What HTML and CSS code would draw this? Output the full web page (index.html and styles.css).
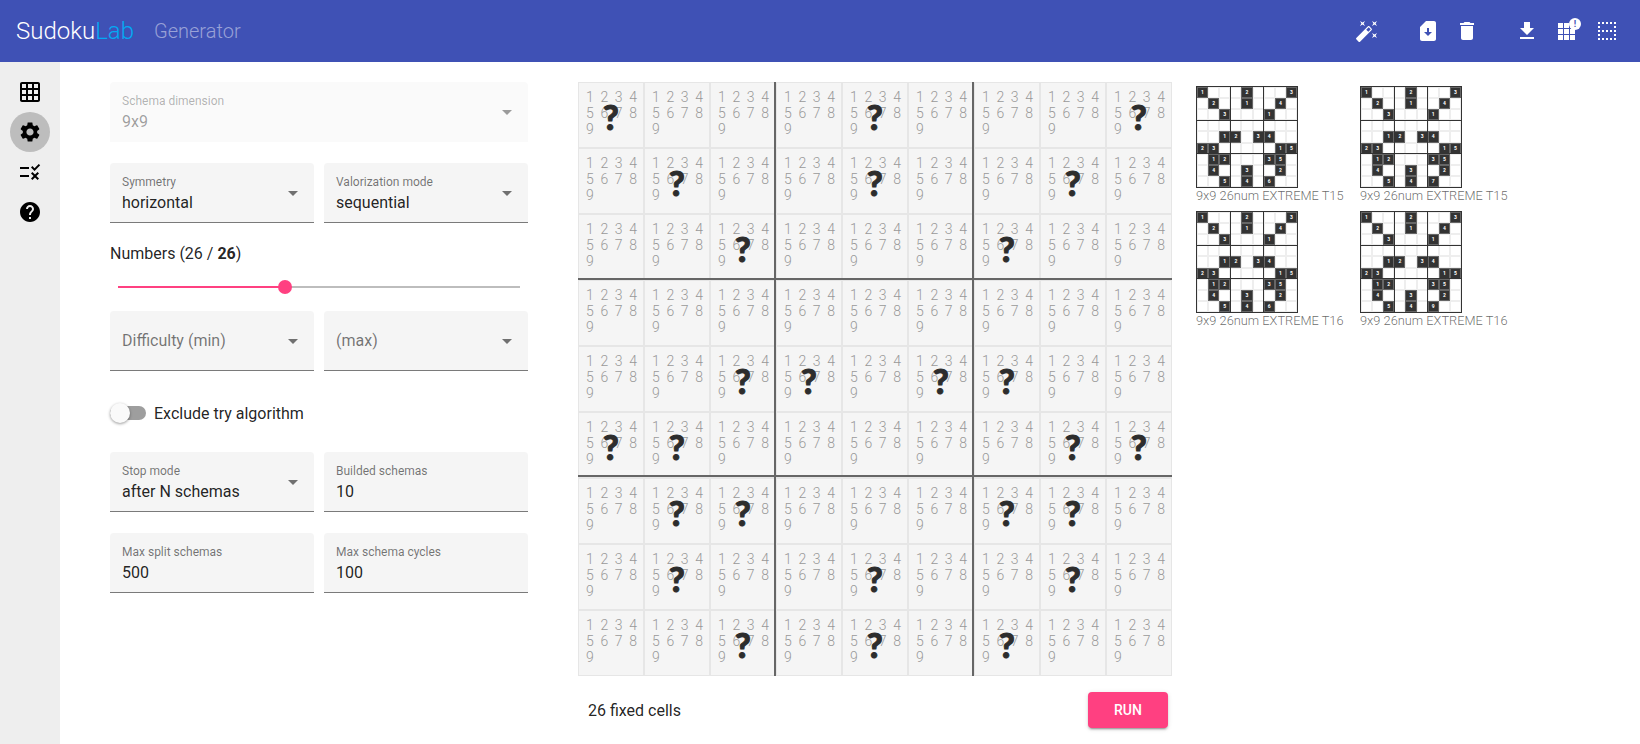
FILE: index.html
```html
<!DOCTYPE html>
<html lang="en">
<head>
<meta charset="utf-8">
<title>SudokuLab Generator</title>
<link rel="stylesheet" href="styles.css">
</head>
<body>
<header class="toolbar">
  <span class="brand">Sudoku<span class="brand-lab">Lab</span></span>
  <span class="page-title">Generator</span>
  <div class="actions">
    <svg class="ico wand" viewBox="0 0 24 24"><path d="M7.5 5.6L10 7 8.6 4.5 10 2 7.5 3.4 5 2l1.4 2.5L5 7zm12 9.8L17 14l1.4 2.5L17 19l2.5-1.4L22 19l-1.4-2.5L22 14zM22 2l-2.5 1.4L17 2l1.4 2.5L17 7l2.5-1.4L22 7l-1.4-2.5zm-7.63 5.29c-.39-.39-1.02-.39-1.41 0L1.29 18.96c-.39.39-.39 1.02 0 1.41l2.34 2.34c.39.39 1.02.39 1.41 0L16.7 11.05c.39-.39.39-1.02 0-1.41l-2.33-2.35zm-1.03 5.49l-2.12-2.12 2.44-2.44 2.12 2.12-2.44 2.44z"/></svg>
    <svg class="ico simcard" viewBox="0 0 24 24"><path d="M18 2h-8L4 8v12c0 1.1.9 2 2 2h12c1.1 0 2-.9 2-2V4c0-1.1-.9-2-2-2zm-6 15l-4-4h3V9.02L13 9v4h3l-4 4z"/></svg>
    <svg class="ico trash" viewBox="0 0 24 24"><path d="M6 19c0 1.1.9 2 2 2h8c1.1 0 2-.9 2-2V7H6v12zM19 4h-3.5l-1-1h-5l-1 1H5v2h14V4z"/></svg>
    <svg class="ico download" viewBox="0 0 24 24"><path d="M19 9h-4V3H9v6H5l7 7 7-7zM5 18v2h14v-2H5z"/></svg>
    <span class="badged">
      <svg class="ico" viewBox="0 0 24 24"><path d="M3 4h5v5H3zM9 4h5v5H9zM15 4h5v5h-5zM3 10h5v5H3zM9 10h5v5H9zM15 10h5v5h-5zM3 16h5v5H3zM9 16h5v5H9zM15 16h5v5h-5z"/></svg>
      <span class="badge">!</span>
    </span>
    <svg class="ico dots" viewBox="0 0 24 24"><path d="M7 5h2V3H7v2zm0 8h2v-2H7v2zm0 8h2v-2H7v2zm4 0h2v-2h-2v2zM3 21h2v-2H3v2zm0-4h2v-2H3v2zm0-4h2v-2H3v2zm0-4h2V7H3v2zm0-4h2V3H3v2zm8 8h2v-2h-2v2zm8 4h2v-2h-2v2zm0-4h2v-2h-2v2zm0 8h2v-2h-2v2zm0-12h2V7h-2v2zm0-6v2h2V3h-2zm-8 2h2V3h-2v2zm4 16h2v-2h-2v2zm0-8h2v-2h-2v2zm0-8h2V3h-2v2z"/></svg>
  </div>
</header>
<div class="layout">
  <nav class="sidebar">
    <span class="nav-item"><svg class="nav-ico" viewBox="0 0 24 24"><path d="M20 2H4c-1.1 0-2 .9-2 2v16c0 1.1.9 2 2 2h16c1.1 0 2-.9 2-2V4c0-1.1-.9-2-2-2zM8 20H4v-4h4v4zm0-6H4v-4h4v4zm0-6H4V4h4v4zm6 12h-4v-4h4v4zm0-6h-4v-4h4v4zm0-6h-4V4h4v4zm6 12h-4v-4h4v4zm0-6h-4v-4h4v4zm0-6h-4V4h4v4z"/></svg></span>
    <span class="nav-item active"><svg class="nav-ico" viewBox="0 0 24 24"><path d="M19.14,12.94c0.04-0.3,0.06-0.61,0.06-0.94c0-0.32-0.02-0.64-0.07-0.94l2.03-1.58c0.18-0.14,0.23-0.41,0.12-0.61 l-1.92-3.32c-0.12-0.22-0.37-0.29-0.59-0.22l-2.39,0.96c-0.5-0.38-1.03-0.7-1.62-0.94L14.4,2.81c-0.04-0.24-0.24-0.41-0.48-0.41 h-3.84c-0.24,0-0.43,0.17-0.47,0.41L9.25,5.35C8.66,5.59,8.12,5.92,7.63,6.29L5.24,5.33c-0.22-0.08-0.47,0-0.59,0.22L2.74,8.87 C2.62,9.08,2.66,9.34,2.86,9.48l2.03,1.58C4.84,11.36,4.8,11.69,4.8,12s0.02,0.64,0.07,0.94l-2.03,1.58 c-0.18,0.14-0.23,0.41-0.12,0.61l1.92,3.32c0.12,0.22,0.37,0.29,0.59,0.22l2.39-0.96c0.5,0.38,1.03,0.7,1.62,0.94l0.36,2.54 c0.05,0.24,0.24,0.41,0.48,0.41h3.84c0.24,0,0.44-0.17,0.47-0.41l0.36-2.54c0.59-0.24,1.13-0.56,1.62-0.94l2.39,0.96 c0.22,0.08,0.47,0,0.59-0.22l1.92-3.32c0.12-0.22,0.07-0.47-0.12-0.61L19.14,12.94z M12,15.6c-1.98,0-3.6-1.62-3.6-3.6 s1.62-3.6,3.6-3.6s3.6,1.62,3.6,3.6S13.98,15.6,12,15.6z"/></svg></span>
    <span class="nav-item"><svg class="nav-ico" viewBox="0 0 24 24"><path d="M16.54 11L13 7.46l1.41-1.41 2.12 2.12 4.24-4.24 1.41 1.41L16.54 11zM11 7H2v2h9V7zm10 6.41L19.59 12 17 14.59 14.41 12 13 13.41 15.59 16 13 18.59 14.41 20 17 17.41 19.59 20 21 18.59 18.41 16 21 13.41zM11 15H2v2h9v-2z"/></svg></span>
    <span class="nav-item"><svg class="nav-ico" viewBox="0 0 24 24"><path d="M12 2C6.48 2 2 6.48 2 12s4.48 10 10 10 10-4.48 10-10S17.52 2 12 2zm1 17h-2v-2h2v2zm2.07-7.75l-.9.92C13.45 12.9 13 13.5 13 15h-2v-.5c0-1.1.45-2.1 1.17-2.83l1.24-1.26c.37-.36.59-.86.59-1.41 0-1.1-.9-2-2-2s-2 .9-2 2H8c0-2.21 1.79-4 4-4s4 1.79 4 4c0 .88-.36 1.68-.93 2.25z"/></svg></span>
  </nav>

  <section class="form">
    <div class="field wide disabled"><label class="lbl">Schema dimension</label><span class="val">9x9</span><i class="arrow"></i></div>
    <div class="field"><label class="lbl">Symmetry</label><span class="val">horizontal</span><i class="arrow"></i></div>
    <div class="field"><label class="lbl">Valorization mode</label><span class="val">sequential</span><i class="arrow"></i></div>
    <div class="numbers">Numbers (26 / <b>26</b>)</div>
    <div class="slider"><span class="slider-fill"></span><span class="slider-thumb"></span></div>
    <div class="field empty"><span class="val">Difficulty (min)</span><i class="arrow"></i></div>
    <div class="field empty"><span class="val">(max)</span><i class="arrow"></i></div>
    <div class="toggle"><span class="toggle-track"><span class="toggle-thumb"></span></span><span>Exclude try algorithm</span></div>
    <div class="field"><label class="lbl">Stop mode</label><span class="val">after N schemas</span><i class="arrow"></i></div>
    <div class="field"><label class="lbl">Builded schemas</label><span class="val">10</span></div>
    <div class="field"><label class="lbl">Max split schemas</label><span class="val">500</span></div>
    <div class="field"><label class="lbl">Max schema cycles</label><span class="val">100</span></div>
  </section>

  <section class="board-col">
    <div class="board">
      <div class="c">1 2 3 4 5 6 7 8 9<em>?</em></div><div class="c">1 2 3 4 5 6 7 8 9</div><div class="c">1 2 3 4 5 6 7 8 9</div><div class="c">1 2 3 4 5 6 7 8 9</div><div class="c">1 2 3 4 5 6 7 8 9<em>?</em></div><div class="c">1 2 3 4 5 6 7 8 9</div><div class="c">1 2 3 4 5 6 7 8 9</div><div class="c">1 2 3 4 5 6 7 8 9</div><div class="c">1 2 3 4 5 6 7 8 9<em>?</em></div>
      <div class="c">1 2 3 4 5 6 7 8 9</div><div class="c">1 2 3 4 5 6 7 8 9<em>?</em></div><div class="c">1 2 3 4 5 6 7 8 9</div><div class="c">1 2 3 4 5 6 7 8 9</div><div class="c">1 2 3 4 5 6 7 8 9<em>?</em></div><div class="c">1 2 3 4 5 6 7 8 9</div><div class="c">1 2 3 4 5 6 7 8 9</div><div class="c">1 2 3 4 5 6 7 8 9<em>?</em></div><div class="c">1 2 3 4 5 6 7 8 9</div>
      <div class="c">1 2 3 4 5 6 7 8 9</div><div class="c">1 2 3 4 5 6 7 8 9</div><div class="c">1 2 3 4 5 6 7 8 9<em>?</em></div><div class="c">1 2 3 4 5 6 7 8 9</div><div class="c">1 2 3 4 5 6 7 8 9</div><div class="c">1 2 3 4 5 6 7 8 9</div><div class="c">1 2 3 4 5 6 7 8 9<em>?</em></div><div class="c">1 2 3 4 5 6 7 8 9</div><div class="c">1 2 3 4 5 6 7 8 9</div>
      <div class="c">1 2 3 4 5 6 7 8 9</div><div class="c">1 2 3 4 5 6 7 8 9</div><div class="c">1 2 3 4 5 6 7 8 9</div><div class="c">1 2 3 4 5 6 7 8 9</div><div class="c">1 2 3 4 5 6 7 8 9</div><div class="c">1 2 3 4 5 6 7 8 9</div><div class="c">1 2 3 4 5 6 7 8 9</div><div class="c">1 2 3 4 5 6 7 8 9</div><div class="c">1 2 3 4 5 6 7 8 9</div>
      <div class="c">1 2 3 4 5 6 7 8 9</div><div class="c">1 2 3 4 5 6 7 8 9</div><div class="c">1 2 3 4 5 6 7 8 9<em>?</em></div><div class="c">1 2 3 4 5 6 7 8 9<em>?</em></div><div class="c">1 2 3 4 5 6 7 8 9</div><div class="c">1 2 3 4 5 6 7 8 9<em>?</em></div><div class="c">1 2 3 4 5 6 7 8 9<em>?</em></div><div class="c">1 2 3 4 5 6 7 8 9</div><div class="c">1 2 3 4 5 6 7 8 9</div>
      <div class="c">1 2 3 4 5 6 7 8 9<em>?</em></div><div class="c">1 2 3 4 5 6 7 8 9<em>?</em></div><div class="c">1 2 3 4 5 6 7 8 9</div><div class="c">1 2 3 4 5 6 7 8 9</div><div class="c">1 2 3 4 5 6 7 8 9</div><div class="c">1 2 3 4 5 6 7 8 9</div><div class="c">1 2 3 4 5 6 7 8 9</div><div class="c">1 2 3 4 5 6 7 8 9<em>?</em></div><div class="c">1 2 3 4 5 6 7 8 9<em>?</em></div>
      <div class="c">1 2 3 4 5 6 7 8 9</div><div class="c">1 2 3 4 5 6 7 8 9<em>?</em></div><div class="c">1 2 3 4 5 6 7 8 9<em>?</em></div><div class="c">1 2 3 4 5 6 7 8 9</div><div class="c">1 2 3 4 5 6 7 8 9</div><div class="c">1 2 3 4 5 6 7 8 9</div><div class="c">1 2 3 4 5 6 7 8 9<em>?</em></div><div class="c">1 2 3 4 5 6 7 8 9<em>?</em></div><div class="c">1 2 3 4 5 6 7 8 9</div>
      <div class="c">1 2 3 4 5 6 7 8 9</div><div class="c">1 2 3 4 5 6 7 8 9<em>?</em></div><div class="c">1 2 3 4 5 6 7 8 9</div><div class="c">1 2 3 4 5 6 7 8 9</div><div class="c">1 2 3 4 5 6 7 8 9<em>?</em></div><div class="c">1 2 3 4 5 6 7 8 9</div><div class="c">1 2 3 4 5 6 7 8 9</div><div class="c">1 2 3 4 5 6 7 8 9<em>?</em></div><div class="c">1 2 3 4 5 6 7 8 9</div>
      <div class="c">1 2 3 4 5 6 7 8 9</div><div class="c">1 2 3 4 5 6 7 8 9</div><div class="c">1 2 3 4 5 6 7 8 9<em>?</em></div><div class="c">1 2 3 4 5 6 7 8 9</div><div class="c">1 2 3 4 5 6 7 8 9<em>?</em></div><div class="c">1 2 3 4 5 6 7 8 9</div><div class="c">1 2 3 4 5 6 7 8 9<em>?</em></div><div class="c">1 2 3 4 5 6 7 8 9</div><div class="c">1 2 3 4 5 6 7 8 9</div>
      <span class="line v1"></span><span class="line v2"></span><span class="line h1"></span><span class="line h2"></span>
    </div>
    <div class="board-foot"><span>26 fixed cells</span><button class="run">RUN</button></div>
  </section>

  <aside class="gallery">
    <figure class="thumb">
      <div class="mini"><b>1</b><i></i><i></i><i></i><b>2</b><i></i><i></i><i></i><b>3</b><i></i><b>2</b><i></i><i></i><b>1</b><i></i><i></i><b>4</b><i></i><i></i><i></i><b>3</b><i></i><i></i><i></i><b>1</b><i></i><i></i><i></i><i></i><i></i><i></i><i></i><i></i><i></i><i></i><i></i><i></i><i></i><b>1</b><b>2</b><i></i><b>3</b><b>4</b><i></i><i></i><b>2</b><b>3</b><i></i><i></i><i></i><i></i><i></i><b>1</b><b>5</b><i></i><b>1</b><b>2</b><i></i><i></i><i></i><b>3</b><b>5</b><i></i><i></i><b>4</b><i></i><i></i><b>3</b><i></i><i></i><b>2</b><i></i><i></i><i></i><b>5</b><i></i><b>4</b><i></i><b>6</b><i></i><i></i><span class="mline mv1"></span><span class="mline mv2"></span><span class="mline mh1"></span><span class="mline mh2"></span></div>
      <figcaption>9x9 26num EXTREME T15</figcaption>
    </figure>
    <figure class="thumb">
      <div class="mini"><b>1</b><i></i><i></i><i></i><b>2</b><i></i><i></i><i></i><b>3</b><i></i><b>2</b><i></i><i></i><b>1</b><i></i><i></i><b>4</b><i></i><i></i><i></i><b>3</b><i></i><i></i><i></i><b>1</b><i></i><i></i><i></i><i></i><i></i><i></i><i></i><i></i><i></i><i></i><i></i><i></i><i></i><b>1</b><b>2</b><i></i><b>3</b><b>4</b><i></i><i></i><b>2</b><b>3</b><i></i><i></i><i></i><i></i><i></i><b>1</b><b>5</b><i></i><b>1</b><b>2</b><i></i><i></i><i></i><b>3</b><b>5</b><i></i><i></i><b>4</b><i></i><i></i><b>3</b><i></i><i></i><b>2</b><i></i><i></i><i></i><b>5</b><i></i><b>4</b><i></i><b>7</b><i></i><i></i><span class="mline mv1"></span><span class="mline mv2"></span><span class="mline mh1"></span><span class="mline mh2"></span></div>
      <figcaption>9x9 26num EXTREME T15</figcaption>
    </figure>
    <figure class="thumb">
      <div class="mini"><b>1</b><i></i><i></i><i></i><b>2</b><i></i><i></i><i></i><b>3</b><i></i><b>2</b><i></i><i></i><b>1</b><i></i><i></i><b>4</b><i></i><i></i><i></i><b>3</b><i></i><i></i><i></i><b>1</b><i></i><i></i><i></i><i></i><i></i><i></i><i></i><i></i><i></i><i></i><i></i><i></i><i></i><b>1</b><b>2</b><i></i><b>3</b><b>4</b><i></i><i></i><b>2</b><b>3</b><i></i><i></i><i></i><i></i><i></i><b>1</b><b>5</b><i></i><b>1</b><b>2</b><i></i><i></i><i></i><b>3</b><b>5</b><i></i><i></i><b>4</b><i></i><i></i><b>3</b><i></i><i></i><b>2</b><i></i><i></i><i></i><b>5</b><i></i><b>4</b><i></i><b>6</b><i></i><i></i><span class="mline mv1"></span><span class="mline mv2"></span><span class="mline mh1"></span><span class="mline mh2"></span></div>
      <figcaption>9x9 26num EXTREME T16</figcaption>
    </figure>
    <figure class="thumb">
      <div class="mini"><b>1</b><i></i><i></i><i></i><b>2</b><i></i><i></i><i></i><b>3</b><i></i><b>2</b><i></i><i></i><b>1</b><i></i><i></i><b>4</b><i></i><i></i><i></i><b>3</b><i></i><i></i><i></i><b>1</b><i></i><i></i><i></i><i></i><i></i><i></i><i></i><i></i><i></i><i></i><i></i><i></i><i></i><b>1</b><b>2</b><i></i><b>3</b><b>4</b><i></i><i></i><b>2</b><b>3</b><i></i><i></i><i></i><i></i><i></i><b>1</b><b>5</b><i></i><b>1</b><b>2</b><i></i><i></i><i></i><b>3</b><b>5</b><i></i><i></i><b>4</b><i></i><i></i><b>3</b><i></i><i></i><b>2</b><i></i><i></i><i></i><b>5</b><i></i><b>4</b><i></i><b>9</b><i></i><i></i><span class="mline mv1"></span><span class="mline mv2"></span><span class="mline mh1"></span><span class="mline mh2"></span></div>
      <figcaption>9x9 26num EXTREME T16</figcaption>
    </figure>
  </aside>
</div>
</body>
</html>
```
FILE: styles.css
```css
* { box-sizing: border-box; }
html, body { margin: 0; height: 100%; }
body { font-family: Roboto, "Liberation Sans", sans-serif; font-size: 16px; color: rgba(0,0,0,.87); background: #fff; overflow: hidden; display: flex; flex-direction: column; }

.toolbar { height: 62px; flex: none; background: #3f51b5; color: #fff; display: flex; align-items: center; padding: 0 16px; }
.brand { font-size: 24px; font-weight: 300; }
.brand-lab { color: #03a9f4; }
.page-title { font-size: 20px; font-weight: 300; margin-left: 20px; color: rgba(255,255,255,.47); }
.actions { margin-left: auto; display: flex; align-items: center; padding-right: 5px; }
.ico { width: 24px; height: 24px; fill: #fff; display: block; }
.wand { margin-right: 37px; }
.simcard { margin-right: 15px; }
.trash { margin-right: 36px; }
.download { margin-right: 16px; }
.badged { position: relative; margin-right: 16px; }
.badge { position: absolute; top: -1px; right: -2px; width: 12px; height: 12px; border-radius: 50%; background: #fff; color: #3f51b5; font-size: 9px; font-weight: 700; line-height: 12px; text-align: center; }

.layout { flex: 1; display: flex; min-height: 0; }
.sidebar { width: 60px; flex: none; background: #eee; display: flex; flex-direction: column; align-items: center; padding-top: 10px; }
.nav-item { width: 40px; height: 40px; border-radius: 50%; display: flex; align-items: center; justify-content: center; }
.nav-item.active { background: #bdbdbd; }
.nav-ico { width: 24px; height: 24px; fill: #000; display: block; }

.form { width: 418px; flex: none; margin: 20px 0 0 50px; display: grid; grid-template-columns: 204px 204px; column-gap: 10px; row-gap: 21px; align-content: start; }
.field { position: relative; height: 60px; background: #f5f5f5; border-radius: 4px 4px 0 0; border-bottom: 1px solid rgba(0,0,0,.5); padding: 11px 12px 0; display: flex; flex-direction: column; }
.field.wide { grid-column: 1 / 3; }
.field.disabled { background: #fafafa; border-bottom: 0; color: rgba(0,0,0,.38); }
.field.disabled .lbl { color: rgba(0,0,0,.3); }
.field.disabled .arrow { border-top-color: rgba(0,0,0,.38); }
.field.empty { justify-content: center; padding-top: 0; }
.lbl { font-size: 12px; line-height: 16px; color: rgba(0,0,0,.54); }
.val { font-size: 16px; line-height: 20px; margin-top: 3px; }
.field.empty .val { color: rgba(0,0,0,.54); margin-top: 1px; }
.arrow { position: absolute; right: 16px; top: 28px; width: 0; height: 0; border-left: 5px solid transparent; border-right: 5px solid transparent; border-top: 5px solid rgba(0,0,0,.54); }
.numbers { grid-column: 1 / 3; line-height: 20px; margin-bottom: 1px; }
.slider { grid-column: 1 / 3; position: relative; height: 2px; margin: 0 8px 2px; background: #bdbdbd; }
.slider-fill { position: absolute; left: 0; top: 0; height: 2px; width: 168px; background: #ff4081; }
.slider-thumb { position: absolute; left: 160px; top: -6px; width: 14px; height: 14px; border-radius: 50%; background: #ff4081; }
.toggle { grid-column: 1 / 3; display: flex; align-items: center; gap: 8px; height: 24px; margin: 9px 0 6px; }
.toggle-track { position: relative; width: 36px; height: 14px; border-radius: 7px; background: #9e9e9e; }
.toggle-thumb { position: absolute; left: 0; top: -3px; width: 20px; height: 20px; border-radius: 50%; background: #fafafa; box-shadow: 0 1px 3px rgba(0,0,0,.4); }

.board-col { width: 594px; flex: none; margin: 20px 0 0 50px; }
.board { position: relative; width: 594px; height: 594px; display: grid; grid-template-columns: repeat(9, 66px); grid-template-rows: repeat(9, 66px); background: #f5f5f5; }
.c { position: relative; border: 1px solid #e6e6e6; padding: 6px 0 0 7px; font-size: 14px; line-height: 16px; font-weight: 300; color: #999; word-spacing: 3.2px; overflow: hidden; }
.c em { position: absolute; inset: 0; padding-top: 3px; display: flex; align-items: center; justify-content: center; font-family: Lato, Roboto, sans-serif; font-style: normal; font-weight: 900; font-size: 34px; color: #2d2d2d; -webkit-text-stroke: 1px #2d2d2d; }
.line { position: absolute; background: #666; }
.line.v1, .line.v2 { top: 0; bottom: 0; width: 2px; }
.line.h1, .line.h2 { left: 0; right: 0; height: 2px; }
.v1 { left: 196px; }
.v2 { left: 394px; }
.h1 { top: 196px; }
.h2 { top: 393px; }
.board-foot { display: flex; align-items: center; justify-content: space-between; padding: 16px 4px 0 10px; }
.run { width: 80px; height: 36px; border: 0; border-radius: 4px; background: #ff4081; color: #fff; font: 500 14px Roboto, sans-serif; box-shadow: 0 3px 1px -2px rgba(0,0,0,.2), 0 2px 2px rgba(0,0,0,.14), 0 1px 5px rgba(0,0,0,.12); }

.gallery { flex: none; margin: 24px 0 0 24px; display: grid; grid-template-columns: 164px 164px; grid-auto-rows: 125px; }
.thumb { margin: 0; }
.mini { position: relative; width: 102px; height: 102px; border: 1px solid #333; display: grid; grid-template-columns: repeat(9, 1fr); grid-template-rows: repeat(9, 1fr); }
.mini i, .mini b { display: block; border: 1px solid #eee; }
.mini b { background: #333; border-color: #666; color: #fff; font-size: 5px; line-height: 9px; text-align: center; font-weight: 700; }
.mline { position: absolute; background: #333; }
.mv1, .mv2 { top: 0; bottom: 0; width: 1px; }
.mh1, .mh2 { left: 0; right: 0; height: 1px; }
.mv1 { left: 33px; }
.mv2 { left: 66px; }
.mh1 { top: 33px; }
.mh2 { top: 66px; }
figcaption { font-size: 12.8px; line-height: 16px; font-weight: 300; color: rgba(0,0,0,.6); white-space: nowrap; }
```
